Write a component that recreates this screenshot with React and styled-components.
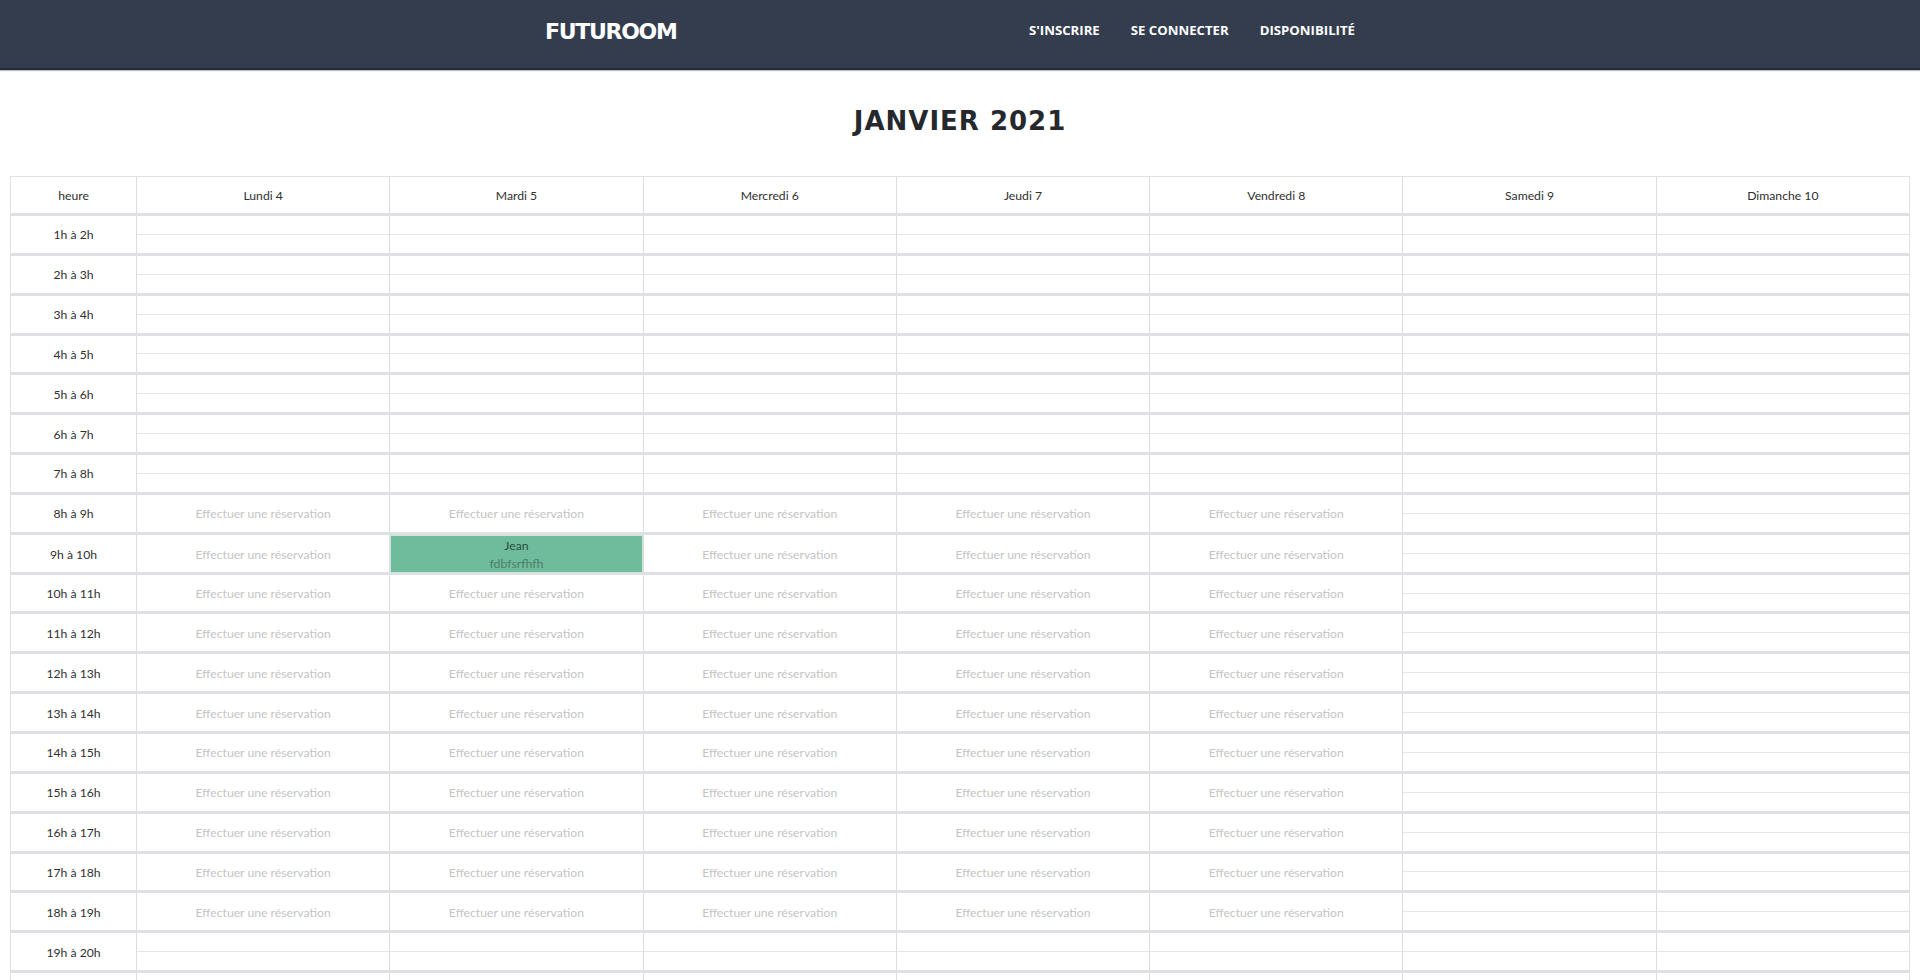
import React from 'react';
import styled, { createGlobalStyle } from 'styled-components';

const GlobalStyle = createGlobalStyle`
    html {
        scrollbar-width: none;
    }

    body {
        margin: 0;
        background: #fff;
        font-family: 'Lato', 'Liberation Sans', sans-serif;
        color: #333;
    }
`;

const TopBar = styled.header`
    height: 68px;
    background: #343d4e;
    border-bottom: 2px solid #232a36;
    box-shadow: 0 1px 1px rgba(60, 70, 90, 0.35);
`;

const TopInner = styled.nav`
    display: flex;
    align-items: center;
    justify-content: space-between;
    max-width: 830px;
    height: 100%;
    margin: 0 auto;
    padding: 0 20px 6px 0;
    box-sizing: border-box;
`;

const Brand = styled.a`
    font-family: 'DejaVu Sans', sans-serif;
    font-weight: 700;
    font-size: 22px;
    letter-spacing: -1.3px;
    color: #fff;
    text-decoration: none;
`;

const Menu = styled.ul`
    display: flex;
    gap: 31px;
    margin: 0 0 4px;
    padding: 0;
    list-style: none;
`;

const MenuLink = styled.a`
    font-family: 'Open Sans', sans-serif;
    font-weight: 700;
    font-size: 13.2px;
    color: #fff;
    text-decoration: none;
`;

const Month = styled.h1`
    margin: 0;
    padding: 35px 0 39px;
    text-align: center;
    font-family: 'DejaVu Sans', sans-serif;
    font-weight: 700;
    font-size: 26px;
    line-height: 32px;
    letter-spacing: 1px;
    color: #25282d;
`;

const Planning = styled.section`
    margin: 0 10px;
    border: 1px solid #dee2e6;
    border-bottom: none;
`;

const Row = styled.div`
    display: grid;
    grid-template-columns: 125px repeat(7, 1fr);
    height: ${p => (p.$head ? '36px' : '36.85px')};
    border-top: ${p => (p.$head ? 'none' : '3px solid #dfe0e4')};
    font-size: 12.2px;
`;

const Cell = styled.div`
    display: flex;
    align-items: center;
    justify-content: center;
    padding-top: 1px;
    color: #2f2f2f;

    & + & {
        border-left: 1px solid #dcdde0;
    }
`;

const SlotCell = styled.div`
    display: flex;
    flex-direction: column;
    border-left: 1px solid #dcdde0;
`;

const Half = styled.div`
    flex: 1;

    &:first-child {
        border-bottom: 1px solid #e4e5e8;
    }
`;

const Book = styled.div`
    display: flex;
    align-items: center;
    justify-content: center;
    padding-top: 1px;
    border-left: 1px solid #dcdde0;
    color: #c4c4c4;
    cursor: pointer;
`;

const Booked = styled.div`
    display: flex;
    flex-direction: column;
    align-items: center;
    justify-content: center;
    padding-top: 2px;
    border-left: 1px solid #dcdde0;
    background: #6fbc9c;
    box-shadow: inset 0 0 0 1px #cfe5db;
    line-height: 18px;
`;

const Who = styled.span`
    color: #274c3d;
`;

const What = styled.span`
    color: #4a7f6b;
`;

const days = [
    'Lundi 4',
    'Mardi 5',
    'Mercredi 6',
    'Jeudi 7',
    'Vendredi 8',
    'Samedi 9',
    'Dimanche 10',
];

const hours = Array.from({ length: 23 }, (_, i) => i + 1);

const bookings = { '9-1': { name: 'Jean', note: 'fdbfsrfhfh' } };

function Slot({ hour, day }) {
    const booking = bookings[`${hour}-${day}`];

    if (booking) {
        return (
            <Booked>
                <Who>{booking.name}</Who>
                <What>{booking.note}</What>
            </Booked>
        );
    }

    if (hour >= 8 && hour <= 18 && day < 5) {
        return <Book>Effectuer une réservation</Book>;
    }

    return (
        <SlotCell>
            <Half />
            <Half />
        </SlotCell>
    );
}

export default function App() {
    return (
        <>
            <GlobalStyle />
            <TopBar>
                <TopInner>
                    <Brand href="#">FUTUROOM</Brand>
                    <Menu>
                        <li>
                            <MenuLink href="#">S'INSCRIRE</MenuLink>
                        </li>
                        <li>
                            <MenuLink href="#">SE CONNECTER</MenuLink>
                        </li>
                        <li>
                            <MenuLink href="#">DISPONIBILITÉ</MenuLink>
                        </li>
                    </Menu>
                </TopInner>
            </TopBar>

            <Month>JANVIER 2021</Month>

            <Planning>
                <Row $head>
                    <Cell>heure</Cell>
                    {days.map(d => (
                        <Cell key={d}>{d}</Cell>
                    ))}
                </Row>
                {hours.map(h => (
                    <Row key={h}>
                        <Cell>{`${h}h à ${h + 1}h`}</Cell>
                        {days.map((d, i) => (
                            <Slot key={d} hour={h} day={i} />
                        ))}
                    </Row>
                ))}
            </Planning>
        </>
    );
}
